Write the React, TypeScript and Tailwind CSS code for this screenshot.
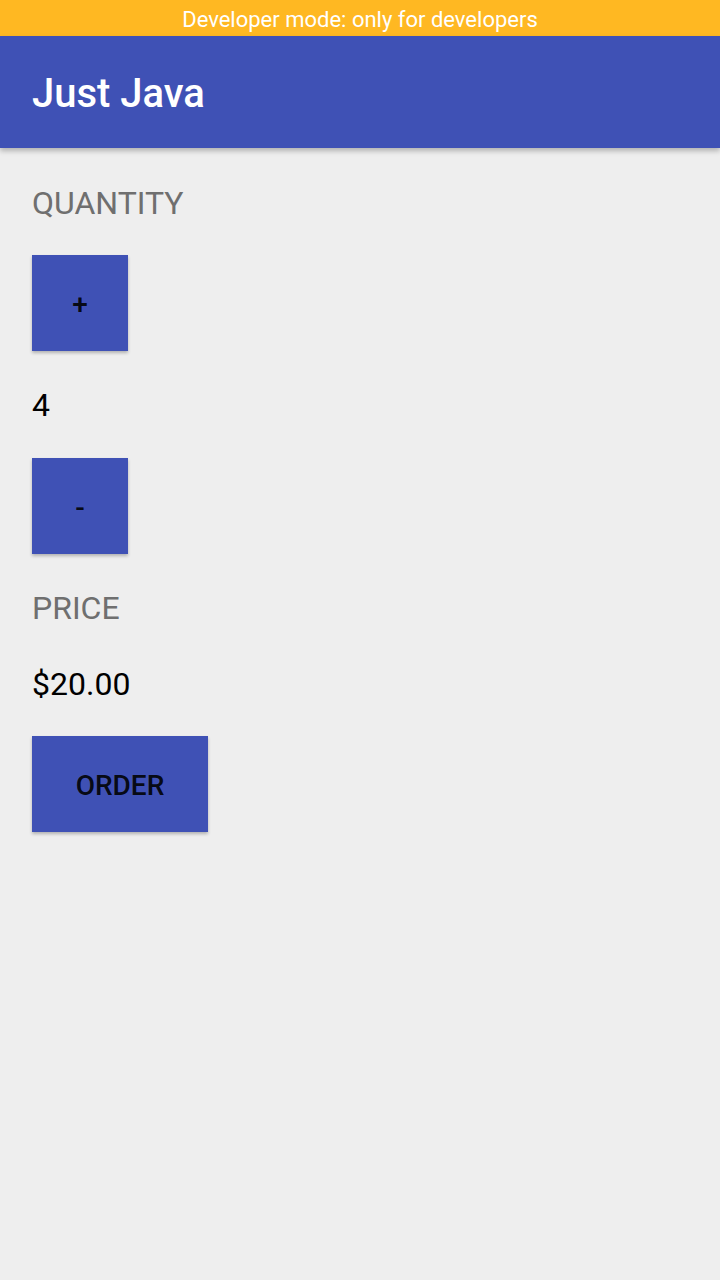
import React from "react";

const font = { fontFamily: "Roboto, 'Noto Sans', Arial, sans-serif" };

function SquareButton({ label, wide }: { label: string; wide?: boolean }) {
  return (
    <button
      className={
        (wide ? "w-[176px] " : "w-[96px] ") +
        "h-[96px] bg-[#3f51b5] flex items-center justify-center pt-[4px] text-[28px] font-medium leading-none text-black/90 shadow-[0_2px_3px_rgba(0,0,0,0.25)]"
      }
    >
      {label}
    </button>
  );
}

export default function App() {
  return (
    <div className="w-[720px] h-[1280px] bg-[#eeeeee] flex flex-col" style={font}>
      <div className="h-[36px] bg-[#ffb822] flex items-center justify-center pt-[3px] text-white text-[22px] leading-none">
        Developer mode: only for developers
      </div>
      <div className="h-[112px] bg-[#3f51b5] flex items-center px-[32px] shadow-[0_3px_5px_rgba(0,0,0,0.25)] relative z-10">
        <span className="text-white text-[40px] font-medium leading-[40px] pt-[3px]">Just Java</span>
      </div>
      <div className="flex flex-col items-start px-[32px]">
        <div className="mt-[39px] text-[32px] leading-[32px] text-[#6f6f6f]">QUANTITY</div>
        <div className="mt-[36px]">
          <SquareButton label="+" />
        </div>
        <div className="mt-[38px] text-[32px] leading-[32px] text-black">4</div>
        <div className="mt-[37px]">
          <SquareButton label="-" />
        </div>
        <div className="mt-[38px] text-[32px] leading-[32px] text-[#6f6f6f]">PRICE</div>
        <div className="mt-[44px] text-[32px] leading-[32px] text-black">$20.00</div>
        <div className="mt-[36px]">
          <SquareButton label="ORDER" wide />
        </div>
      </div>
    </div>
  );
}
